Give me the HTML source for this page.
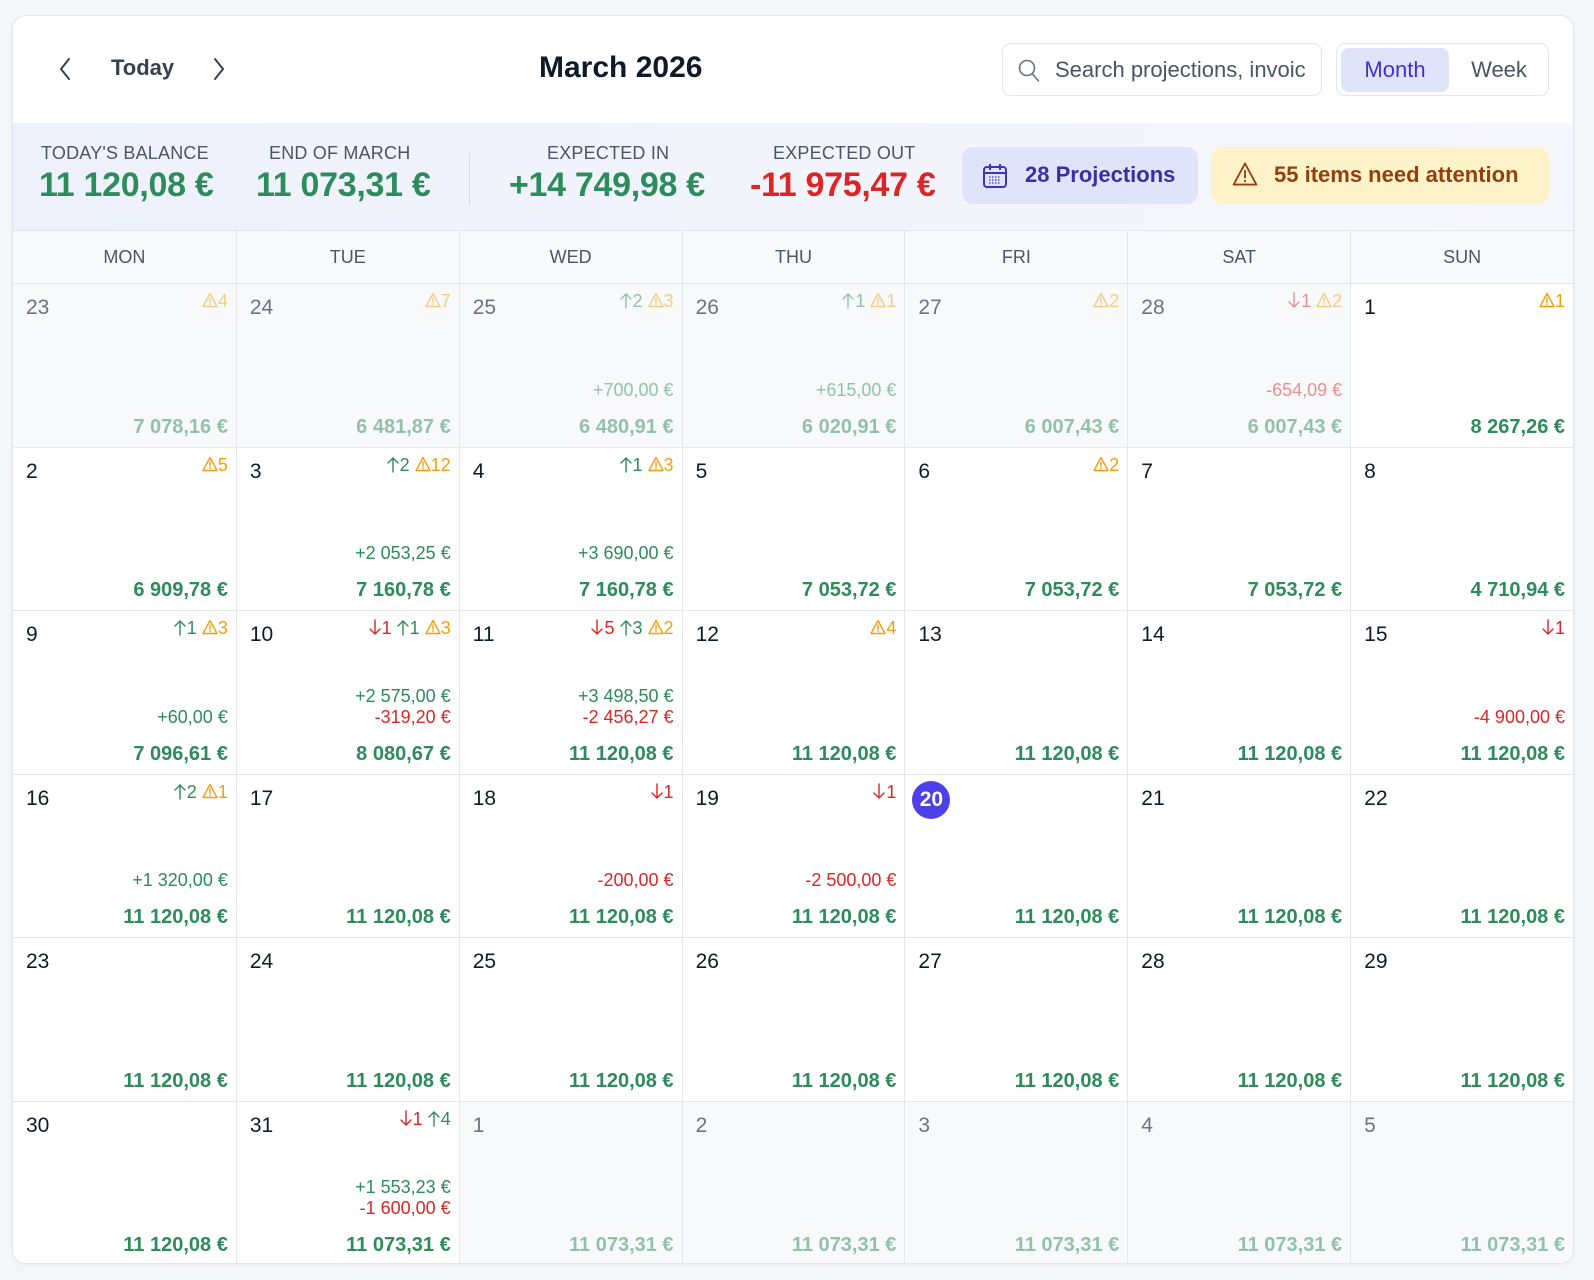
<!DOCTYPE html>
<html><head><meta charset="utf-8"><style>
*{box-sizing:border-box;margin:0;padding:0}
body{width:1594px;height:1280px;background:#f5f6f9;font-family:"Liberation Sans",sans-serif;position:relative;overflow:hidden;color:#111827}
.card{position:absolute;left:12px;top:15px;width:1562px;height:1249px;background:#fff;border:1px solid #e3e5ea;border-radius:14px;overflow:hidden;box-shadow:0 1px 3px rgba(0,0,0,.06)}
.top{position:absolute;left:0;top:0;width:100%;height:107px}
.abs{position:absolute}
.band{position:absolute;left:0;top:107px;width:100%;height:107px;background:linear-gradient(90deg,#eef1fc,#f6f7fc)}
.lbl{position:absolute;top:20px;font-size:18px;color:#4b5563;letter-spacing:.2px}
.val{position:absolute;top:43px;font-size:34px;font-weight:bold;color:#2e8b5b;letter-spacing:-.3px}
.wk{position:absolute;left:0;top:214px;width:100%;height:54px;display:grid;grid-template-columns:repeat(7,1fr);background:#f8f9fb;border-top:1px solid #e3e5ea;border-bottom:1px solid #e3e5ea}
.wk div{text-align:center;line-height:52px;font-size:18px;color:#4b5563;border-left:1px solid #e3e5ea}
.wk div:first-child{border-left:none}
.grid{position:absolute;left:0;top:268px;width:100%;height:981px;display:grid;grid-template-columns:repeat(7,1fr);grid-template-rows:repeat(6,1fr)}
.c{position:relative;border-left:1px solid #e6e7eb;border-bottom:1px solid #e6e7eb;background:#fff}
.c:nth-child(7n+1){border-left:none}
.c:nth-child(n+36){border-bottom:none}
.n{position:absolute;left:13px;top:12px;font-size:21px;color:#111827}
.c:nth-child(7n+1) .n{left:13px}
.ind{position:absolute;right:8px;top:7px;font-size:18px;white-space:nowrap}
.am{position:absolute;right:8px;bottom:46px;text-align:right;font-size:18px;line-height:21px}
.b{position:absolute;right:8px;bottom:8px;font-size:20px;font-weight:bold;color:#2e8b5b}
.g{color:#2e8b5b}.r{color:#dc2626}.y{color:#f59e0b}
.m{background:#f8f9fb}
.m .n{color:#6b7280}
.m .ind,.m .am,.m .b{opacity:.5}
.t{width:38px;height:38px;border-radius:50%;background:#4f3fe8;color:#fff;font-weight:bold;text-align:center;line-height:38px;left:7px !important;top:6px;font-size:21px}
svg.w{width:16px;height:16px;vertical-align:-1px}
svg.a{width:12px;height:17px;vertical-align:-2px;margin-right:1px}
</style></head><body>
<svg width="0" height="0" style="position:absolute"><defs>
<symbol id="wa" viewBox="0 0 16 16"><path d="M8 1.5L15 14.5H1Z" fill="none" stroke="currentColor" stroke-width="1.4" stroke-linejoin="round"/><path d="M8 6v4.2M8 12v.6" stroke="currentColor" stroke-width="1.4" stroke-linecap="round"/></symbol>
<symbol id="up" viewBox="0 0 12 17"><path d="M6 16V2M1 7l5-5 5 5" fill="none" stroke="currentColor" stroke-width="1.4" stroke-linecap="round" stroke-linejoin="round"/></symbol>
<symbol id="dn" viewBox="0 0 12 17"><path d="M6 1v14M1 10l5 5 5-5" fill="none" stroke="currentColor" stroke-width="1.4" stroke-linecap="round" stroke-linejoin="round"/></symbol>
</defs></svg>
<div class="card">
 <div class="top">
  <svg class="abs" style="left:44px;top:40px" width="16" height="26" viewBox="0 0 16 26"><path d="M12 3L4 13l8 10" fill="none" stroke="#374151" stroke-width="2" stroke-linecap="round"/></svg>
  <div class="abs" style="left:98px;top:39px;font-size:22px;font-weight:bold;color:#374151">Today</div>
  <svg class="abs" style="left:198px;top:40px" width="16" height="26" viewBox="0 0 16 26"><path d="M4 3l8 10-8 10" fill="none" stroke="#374151" stroke-width="2" stroke-linecap="round"/></svg>
  <div class="abs" style="left:526px;top:35px;font-size:30px;font-weight:bold;color:#111827">March 2026</div>
  <div class="abs" style="left:989px;top:27px;width:320px;height:53px;border:1px solid #e3e5ea;border-radius:9px;overflow:hidden">
   <svg class="abs" style="left:14px;top:14px" width="24" height="26" viewBox="0 0 24 26"><circle cx="10" cy="10" r="7.5" fill="none" stroke="#6b7280" stroke-width="1.6"/><path d="M15.5 16l6 7" stroke="#6b7280" stroke-width="1.6" stroke-linecap="round"/></svg>
   <div class="abs" style="left:52px;top:13px;font-size:22px;color:#4b5563;white-space:nowrap;width:250px;overflow:hidden">Search projections, invoices</div>
  </div>
  <div class="abs" style="left:1323px;top:27px;width:213px;height:53px;border:1px solid #e3e5ea;border-radius:9px">
   <div class="abs" style="left:4px;top:4px;width:108px;height:44px;background:#e0e4fb;border-radius:8px;color:#3f2fd9;font-size:22px;text-align:center;line-height:44px">Month</div>
   <div class="abs" style="left:118px;top:4px;width:88px;height:44px;color:#4b5563;font-size:22px;text-align:center;line-height:44px">Week</div>
  </div>
 </div>
 <div class="band">
  <div class="lbl" style="left:28px">TODAY'S BALANCE</div>
  <div class="val" style="left:26px">11 120,08 €</div>
  <div class="lbl" style="left:256px">END OF MARCH</div>
  <div class="val" style="left:243px">11 073,31 €</div>
  <div class="abs" style="left:456px;top:30px;width:1px;height:52px;background:#d6d9e0"></div>
  <div class="lbl" style="left:534px">EXPECTED IN</div>
  <div class="val" style="left:496px">+14 749,98 €</div>
  <div class="lbl" style="left:760px">EXPECTED OUT</div>
  <div class="val" style="left:737px;color:#dc2626">-11 975,47 €</div>
  <div class="abs" style="left:949px;top:24px;width:236px;height:57px;background:#e0e4fb;border-radius:11px">
   <svg class="abs" style="left:20px;top:16px" width="26" height="26" viewBox="0 0 26 26"><rect x="2" y="4" width="22" height="20" rx="3" fill="none" stroke="#3f35b8" stroke-width="2"/><path d="M2 10h22M8 1v6M18 1v6" stroke="#3f35b8" stroke-width="2"/><path d="M7 14h12M7 17h12M7 20h12" stroke="#3f35b8" stroke-width="1.2" stroke-dasharray="1.5 1.5"/></svg>
   <div class="abs" style="left:63px;top:15px;font-size:22px;font-weight:bold;color:#3730a3;white-space:nowrap">28 Projections</div>
  </div>
  <div class="abs" style="left:1198px;top:24px;width:338px;height:57px;background:#fdf2c8;border-radius:11px">
   <svg class="abs" style="left:20px;top:14px" width="28" height="26" viewBox="0 0 16 16"><path d="M8 1.5L15 14.5H1Z" fill="none" stroke="#92400e" stroke-width="1.1" stroke-linejoin="round"/><path d="M8 6v4.2M8 12v.6" stroke="#92400e" stroke-width="1.1" stroke-linecap="round"/></svg>
   <div class="abs" style="left:63px;top:15px;font-size:22px;font-weight:bold;color:#92400e;white-space:nowrap">55 items need attention</div>
  </div>
 </div>
 <div class="wk"><div>MON</div><div>TUE</div><div>WED</div><div>THU</div><div>FRI</div><div>SAT</div><div>SUN</div></div>
 <div class="grid">
  <div class="c m"><div class="n">23</div><div class="ind y"><svg class="w"><use href="#wa"/></svg>4</div><div class="b">7 078,16 €</div></div>
  <div class="c m"><div class="n">24</div><div class="ind y"><svg class="w"><use href="#wa"/></svg>7</div><div class="b">6 481,87 €</div></div>
  <div class="c m"><div class="n">25</div><div class="ind"><span class="g"><svg class="a"><use href="#up"/></svg>2</span> <span class="y"><svg class="w"><use href="#wa"/></svg>3</span></div><div class="am g">+700,00 €</div><div class="b">6 480,91 €</div></div>
  <div class="c m"><div class="n">26</div><div class="ind"><span class="g"><svg class="a"><use href="#up"/></svg>1</span> <span class="y"><svg class="w"><use href="#wa"/></svg>1</span></div><div class="am g">+615,00 €</div><div class="b">6 020,91 €</div></div>
  <div class="c m"><div class="n">27</div><div class="ind y"><svg class="w"><use href="#wa"/></svg>2</div><div class="b">6 007,43 €</div></div>
  <div class="c m"><div class="n">28</div><div class="ind"><span class="r"><svg class="a"><use href="#dn"/></svg>1</span> <span class="y"><svg class="w"><use href="#wa"/></svg>2</span></div><div class="am r">-654,09 €</div><div class="b">6 007,43 €</div></div>
  <div class="c"><div class="n">1</div><div class="ind y"><svg class="w"><use href="#wa"/></svg>1</div><div class="b">8 267,26 €</div></div>

  <div class="c"><div class="n">2</div><div class="ind y"><svg class="w"><use href="#wa"/></svg>5</div><div class="b">6 909,78 €</div></div>
  <div class="c"><div class="n">3</div><div class="ind"><span class="g"><svg class="a"><use href="#up"/></svg>2</span> <span class="y"><svg class="w"><use href="#wa"/></svg>12</span></div><div class="am g">+2 053,25 €</div><div class="b">7 160,78 €</div></div>
  <div class="c"><div class="n">4</div><div class="ind"><span class="g"><svg class="a"><use href="#up"/></svg>1</span> <span class="y"><svg class="w"><use href="#wa"/></svg>3</span></div><div class="am g">+3 690,00 €</div><div class="b">7 160,78 €</div></div>
  <div class="c"><div class="n">5</div><div class="b">7 053,72 €</div></div>
  <div class="c"><div class="n">6</div><div class="ind y"><svg class="w"><use href="#wa"/></svg>2</div><div class="b">7 053,72 €</div></div>
  <div class="c"><div class="n">7</div><div class="b">7 053,72 €</div></div>
  <div class="c"><div class="n">8</div><div class="b">4 710,94 €</div></div>

  <div class="c"><div class="n">9</div><div class="ind"><span class="g"><svg class="a"><use href="#up"/></svg>1</span> <span class="y"><svg class="w"><use href="#wa"/></svg>3</span></div><div class="am g">+60,00 €</div><div class="b">7 096,61 €</div></div>
  <div class="c"><div class="n">10</div><div class="ind"><span class="r"><svg class="a"><use href="#dn"/></svg>1</span> <span class="g"><svg class="a"><use href="#up"/></svg>1</span> <span class="y"><svg class="w"><use href="#wa"/></svg>3</span></div><div class="am"><div class="g">+2 575,00 €</div><div class="r">-319,20 €</div></div><div class="b">8 080,67 €</div></div>
  <div class="c"><div class="n">11</div><div class="ind"><span class="r"><svg class="a"><use href="#dn"/></svg>5</span> <span class="g"><svg class="a"><use href="#up"/></svg>3</span> <span class="y"><svg class="w"><use href="#wa"/></svg>2</span></div><div class="am"><div class="g">+3 498,50 €</div><div class="r">-2 456,27 €</div></div><div class="b">11 120,08 €</div></div>
  <div class="c"><div class="n">12</div><div class="ind y"><svg class="w"><use href="#wa"/></svg>4</div><div class="b">11 120,08 €</div></div>
  <div class="c"><div class="n">13</div><div class="b">11 120,08 €</div></div>
  <div class="c"><div class="n">14</div><div class="b">11 120,08 €</div></div>
  <div class="c"><div class="n">15</div><div class="ind r"><svg class="a"><use href="#dn"/></svg>1</div><div class="am r">-4 900,00 €</div><div class="b">11 120,08 €</div></div>

  <div class="c"><div class="n">16</div><div class="ind"><span class="g"><svg class="a"><use href="#up"/></svg>2</span> <span class="y"><svg class="w"><use href="#wa"/></svg>1</span></div><div class="am g">+1 320,00 €</div><div class="b">11 120,08 €</div></div>
  <div class="c"><div class="n">17</div><div class="b">11 120,08 €</div></div>
  <div class="c"><div class="n">18</div><div class="ind r"><svg class="a"><use href="#dn"/></svg>1</div><div class="am r">-200,00 €</div><div class="b">11 120,08 €</div></div>
  <div class="c"><div class="n">19</div><div class="ind r"><svg class="a"><use href="#dn"/></svg>1</div><div class="am r">-2 500,00 €</div><div class="b">11 120,08 €</div></div>
  <div class="c"><div class="n t">20</div><div class="b">11 120,08 €</div></div>
  <div class="c"><div class="n">21</div><div class="b">11 120,08 €</div></div>
  <div class="c"><div class="n">22</div><div class="b">11 120,08 €</div></div>

  <div class="c"><div class="n">23</div><div class="b">11 120,08 €</div></div>
  <div class="c"><div class="n">24</div><div class="b">11 120,08 €</div></div>
  <div class="c"><div class="n">25</div><div class="b">11 120,08 €</div></div>
  <div class="c"><div class="n">26</div><div class="b">11 120,08 €</div></div>
  <div class="c"><div class="n">27</div><div class="b">11 120,08 €</div></div>
  <div class="c"><div class="n">28</div><div class="b">11 120,08 €</div></div>
  <div class="c"><div class="n">29</div><div class="b">11 120,08 €</div></div>

  <div class="c"><div class="n">30</div><div class="b">11 120,08 €</div></div>
  <div class="c"><div class="n">31</div><div class="ind"><span class="r"><svg class="a"><use href="#dn"/></svg>1</span> <span class="g"><svg class="a"><use href="#up"/></svg>4</span></div><div class="am"><div class="g">+1 553,23 €</div><div class="r">-1 600,00 €</div></div><div class="b">11 073,31 €</div></div>
  <div class="c m"><div class="n">1</div><div class="b">11 073,31 €</div></div>
  <div class="c m"><div class="n">2</div><div class="b">11 073,31 €</div></div>
  <div class="c m"><div class="n">3</div><div class="b">11 073,31 €</div></div>
  <div class="c m"><div class="n">4</div><div class="b">11 073,31 €</div></div>
  <div class="c m"><div class="n">5</div><div class="b">11 073,31 €</div></div>
 </div>
</div>
</body></html>
